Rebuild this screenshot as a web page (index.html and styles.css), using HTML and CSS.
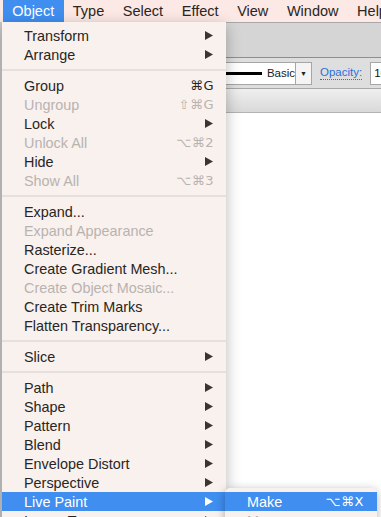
FILE: index.html
```html
<!DOCTYPE html>
<html lang="en">
<head>
  <meta charset="UTF-8">
  <meta name="viewport" content="width=device-width, initial-scale=1.0">
  <title>Object Menu</title>
<link rel="stylesheet" href="styles.css">
</head>
<body>
  <div class="menubar">
    <span class="menubar-item active">Object</span>
    <span class="menubar-item">Type</span>
    <span class="menubar-item">Select</span>
    <span class="menubar-item">Effect</span>
    <span class="menubar-item">View</span>
    <span class="menubar-item">Window</span>
    <span class="menubar-item">Help</span>
  </div>

  <div class="window">
    <div class="titlebar"></div>
    <div class="controlbar">
      <div class="stroke-field">
        <span class="stroke-line"></span>
        <span class="stroke-name">Basic</span>
      </div>
      <div class="drop-btn">&#9660;</div>
      <a class="opacity-link">Opacity:</a>
      <div class="opacity-field">100%</div>
    </div>
    <div class="docbar"></div>
    <div class="canvas"></div>
  </div>

  <div class="menu">
    <div class="item">Transform <svg class="arrow" viewBox="0 0 8 9"><path d="M0 0L8 4.5L0 9Z"/></svg></div>
    <div class="item">Arrange <svg class="arrow" viewBox="0 0 8 9"><path d="M0 0L8 4.5L0 9Z"/></svg></div>
    <div class="sep"></div>
    <div class="item">Group <span class="key">&#8984;G</span></div>
    <div class="item disabled">Ungroup <span class="key">&#8679;&#8984;G</span></div>
    <div class="item">Lock <svg class="arrow" viewBox="0 0 8 9"><path d="M0 0L8 4.5L0 9Z"/></svg></div>
    <div class="item disabled">Unlock All <span class="key">&#8997;&#8984;2</span></div>
    <div class="item">Hide <svg class="arrow" viewBox="0 0 8 9"><path d="M0 0L8 4.5L0 9Z"/></svg></div>
    <div class="item disabled">Show All <span class="key">&#8997;&#8984;3</span></div>
    <div class="sep"></div>
    <div class="item">Expand...</div>
    <div class="item disabled">Expand Appearance</div>
    <div class="item">Rasterize...</div>
    <div class="item">Create Gradient Mesh...</div>
    <div class="item disabled">Create Object Mosaic...</div>
    <div class="item">Create Trim Marks</div>
    <div class="item">Flatten Transparency...</div>
    <div class="sep"></div>
    <div class="item">Slice <svg class="arrow" viewBox="0 0 8 9"><path d="M0 0L8 4.5L0 9Z"/></svg></div>
    <div class="sep"></div>
    <div class="item">Path <svg class="arrow" viewBox="0 0 8 9"><path d="M0 0L8 4.5L0 9Z"/></svg></div>
    <div class="item">Shape <svg class="arrow" viewBox="0 0 8 9"><path d="M0 0L8 4.5L0 9Z"/></svg></div>
    <div class="item">Pattern <svg class="arrow" viewBox="0 0 8 9"><path d="M0 0L8 4.5L0 9Z"/></svg></div>
    <div class="item">Blend <svg class="arrow" viewBox="0 0 8 9"><path d="M0 0L8 4.5L0 9Z"/></svg></div>
    <div class="item">Envelope Distort <svg class="arrow" viewBox="0 0 8 9"><path d="M0 0L8 4.5L0 9Z"/></svg></div>
    <div class="item">Perspective <svg class="arrow" viewBox="0 0 8 9"><path d="M0 0L8 4.5L0 9Z"/></svg></div>
    <div class="item selected">Live Paint <svg class="arrow" viewBox="0 0 8 9"><path d="M0 0L8 4.5L0 9Z"/></svg></div>
    <div class="item">Image Trace <svg class="arrow" viewBox="0 0 8 9"><path d="M0 0L8 4.5L0 9Z"/></svg></div>
  </div>

  <div class="submenu">
    <div class="item selected">Make <span class="key">&#8997;&#8984;X</span></div>
    <div class="item disabled">Merge</div>
  </div>
</body>
</html>
```

FILE: styles.css
```css
body {
  margin: 0;
  width: 381px;
  height: 517px;
  overflow: hidden;
  background-color: #c9c9c9;
  font-family: "Liberation Sans", "DejaVu Sans", sans-serif;
  color: #2a2522;
}

.menubar {
  display: flex;
  height: 22px;
  padding-left: 3px;
  overflow: hidden;
  background-color: #fce8e4;
  font-size: 14.5px;
  line-height: 22px;
  white-space: nowrap;
}

.menubar-item {
  flex-shrink: 0;
  padding: 0 9.3px;
  color: #2a2522;
}

.menubar-item.active {
  background-color: #3f8ef0;
  color: #fff;
}

.window {
  margin-left: 2px;
  overflow: hidden;
  background-color: #fff;
}

.titlebar {
  height: 34px;
  border-top: 1px solid #a9a9a9;
  background-color: #d5d5d5;
}

.controlbar {
  display: flex;
  align-items: center;
  height: 30px;
  padding-left: 159px;
  border-top: 1px solid #8e8e8e;
  background-color: #dedede;
  font-size: 11.5px;
  white-space: nowrap;
}

.controlbar > * {
  flex-shrink: 0;
}

.stroke-field {
  display: flex;
  align-items: center;
  width: 135px;
  height: 23px;
  border: 1px solid #a6a6a6;
  background-color: #fff;
  box-sizing: border-box;
}

.stroke-line {
  width: 92px;
  height: 3px;
  margin: 0 5px 0 8px;
  background-color: #000;
}

.stroke-name {
  color: #222;
}

.drop-btn {
  width: 16px;
  height: 23px;
  border: 1px solid #a6a6a6;
  border-left: none;
  background-color: #f4f4f4;
  box-sizing: border-box;
  font-size: 7px;
  line-height: 21px;
  text-align: center;
  color: #222;
}

.opacity-link {
  margin-left: 8px;
  color: #2c6fd8;
  border-bottom: 1px dotted #2c6fd8;
  line-height: 13px;
}

.opacity-field {
  height: 23px;
  margin-left: 8px;
  padding-left: 3px;
  border: 1px solid #a6a6a6;
  background-color: #fff;
  box-sizing: border-box;
  line-height: 21px;
  color: #111;
}

.docbar {
  height: 23px;
  border-top: 1px solid #a8a8a8;
  border-bottom: 1px solid #b3b3b3;
  background: linear-gradient(#efefef, #d9d9d9);
}

.canvas {
  height: 420px;
  background-color: #fff;
}

.menu {
  position: absolute;
  left: 2px;
  top: 22px;
  width: 224px;
  padding-top: 4px;
  background-color: #f8f1ed;
  box-shadow: 0 4px 14px rgba(0, 0, 0, 0.28);
  font-size: 14.4px;
}

.item {
  display: flex;
  align-items: center;
  justify-content: space-between;
  height: 19px;
  padding: 0 12px 0 22px;
  white-space: nowrap;
}

.item.disabled {
  color: #b9b3b0;
}

.item.selected {
  background-color: #3f8ef0;
  color: #fff;
}

.key {
  font-family: "DejaVu Sans", sans-serif;
  font-size: 13px;
  letter-spacing: 0.5px;
}

.arrow {
  width: 8px;
  height: 9px;
  margin-right: 1px;
  fill: #3b3532;
}

.item.selected .arrow {
  fill: #fff;
}

.sep {
  height: 2px;
  margin: 5px 0;
  background-color: #e6dfdb;
}

.submenu {
  position: absolute;
  left: 225px;
  top: 488px;
  width: 152px;
  padding-top: 4px;
  border-radius: 5px 5px 0 0;
  background-color: #f8f1ed;
  box-shadow: 0 2px 10px rgba(0, 0, 0, 0.3);
  font-size: 14.4px;
}

.submenu .item {
  padding: 0 13px 0 22px;
}
```
